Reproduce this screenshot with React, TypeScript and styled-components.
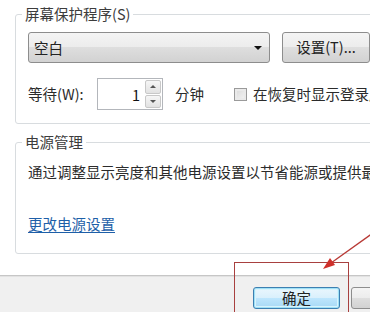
import React from "react";
import styled, { createGlobalStyle } from "styled-components";

const Global = createGlobalStyle`
  html, body { margin: 0; padding: 0; background: #fff; }
  body { font-family: "Noto Sans CJK SC", "Microsoft YaHei", sans-serif; }
`;

const Page = styled.div`
  position: relative;
  width: 370px;
  height: 312px;
  overflow: hidden;
  display: flex;
  flex-direction: column;
  background: #fff;
  font-size: 14.5px;
  color: #2b2b2b;
`;

const Content = styled.div`
  height: 275px;
  flex: none;
  box-sizing: border-box;
  padding: 6px 0 0 15px;
  display: flex;
  flex-direction: column;
  gap: 10px;
`;

const Group = styled.fieldset<{ $pt: number; $pb: number }>`
  margin: 0;
  min-width: 0;
  width: 420px;
  box-sizing: border-box;
  border: 1px solid #d8dcdf;
  border-radius: 3px;
  padding: ${(p) => p.$pt}px 0 ${(p) => p.$pb}px 12px;
`;

const Legend = styled.legend`
  margin-left: -6px;
  padding: 0 3px;
  line-height: 16px;
  color: #3c3c3c;
`;

const Row = styled.div<{ $mt?: number }>`
  display: flex;
  align-items: center;
  margin-top: ${(p) => p.$mt ?? 0}px;
`;

const Combo = styled.div`
  width: 242px;
  height: 31px;
  box-sizing: border-box;
  border: 1px solid #8d8d8d;
  border-radius: 3px;
  background: linear-gradient(#f4f4f4, #ececec 50%, #dedede 50%, #d2d2d2);
  display: flex;
  align-items: center;
  justify-content: space-between;
  padding: 0 7px 0 5px;
  color: #222;
`;

const Arrow = styled.span`
  width: 0;
  height: 0;
  border-left: 4px solid transparent;
  border-right: 4px solid transparent;
  border-top: 4px solid #111;
`;

const PushButton = styled.div<{ $w: number; $h: number }>`
  width: ${(p) => p.$w}px;
  height: ${(p) => p.$h}px;
  flex: none;
  box-sizing: border-box;
  border: 1px solid #8d8d8d;
  border-radius: 3px;
  background: linear-gradient(#f4f4f4, #ececec 50%, #dedede 50%, #d2d2d2);
  display: flex;
  align-items: center;
  justify-content: center;
  color: #222;
  line-height: 1;
`;

const DefaultButton = styled(PushButton)`
  border-color: #3c7fb1;
  box-shadow: inset 0 0 0 1px #9fe0f6, inset 0 0 0 2px #d8f3fc;
  background: linear-gradient(#eaf6fd, #d9f0fc 50%, #bee6fd 50%, #a7d9f5);
`;

const Label = styled.span<{ $w?: number }>`
  width: ${(p) => (p.$w ? `${p.$w}px` : "auto")};
  flex: none;
  white-space: nowrap;
  line-height: 20px;
`;

const Spin = styled.div`
  width: 66px;
  height: 32px;
  box-sizing: border-box;
  border: 1px solid #b3b6bb;
  display: flex;
  background: #fff;
`;

const SpinValue = styled.span`
  flex: 1;
  display: flex;
  align-items: center;
  justify-content: flex-end;
  padding-right: 5px;
  color: #111;
`;

const SpinButtons = styled.div`
  width: 16px;
  display: flex;
  flex-direction: column;
  padding: 1px 1px 1px 0;
  gap: 1px;
`;

const SpinBtn = styled.div<{ $up?: boolean }>`
  flex: 1;
  border: 1px solid #c8c8c8;
  border-radius: 2px;
  background: linear-gradient(#f6f6f6, #e2e2e2);
  display: flex;
  align-items: center;
  justify-content: center;
  &::after {
    content: "";
    border-left: 3px solid transparent;
    border-right: 3px solid transparent;
    ${(p) => (p.$up ? "border-bottom: 3px solid #555;" : "border-top: 3px solid #555;")}
  }
`;

const Check = styled.span`
  width: 13px;
  height: 13px;
  box-sizing: border-box;
  flex: none;
  border: 1px solid #9a9a9a;
  background: linear-gradient(135deg, #d8d8d8, #f6f6f6);
  box-shadow: inset 0 0 0 2px #eaeaea;
  margin-right: 6px;
`;

const Para = styled.div`
  white-space: nowrap;
  line-height: 20px;
  color: #2b2b2b;
`;

const Link = styled.a`
  display: block;
  width: max-content;
  margin-top: 32px;
  line-height: 20px;
  color: #1e5fa8;
  text-decoration: underline;
  text-underline-offset: 2px;
`;

const Footer = styled.div`
  flex: 1;
  border-top: 1px solid #c6c6c6;
  box-shadow: inset 0 1px 0 #e2e2e2;
  background: #f0f0f0;
  display: flex;
  gap: 11px;
  padding: 11px 0 0 253px;
`;

const Mark = styled.div`
  position: absolute;
  left: 234px;
  top: 262px;
  width: 113px;
  height: 80px;
  border: 1px solid #a8403f;
  pointer-events: none;
`;

const Overlay = styled.svg`
  position: absolute;
  left: 0;
  top: 0;
  pointer-events: none;
`;

export default function App() {
  return (
    <Page>
      <Global />
      <Content>
        <Group $pt={10} $pb={13}>
          <Legend>屏幕保护程序(S)</Legend>
          <Row>
            <Combo>
              <span>空白</span>
              <Arrow />
            </Combo>
            <PushButton $w={88} $h={31} style={{ marginLeft: 12 }}>
              设置(T)...
            </PushButton>
          </Row>
          <Row $mt={15}>
            <Label $w={69}>等待(W):</Label>
            <Spin>
              <SpinValue>1</SpinValue>
              <SpinButtons>
                <SpinBtn $up />
                <SpinBtn />
              </SpinButtons>
            </Spin>
            <Label $w={59} style={{ paddingLeft: 12 }}>分钟</Label>
            <Check />
            <Label>在恢复时显示登录屏幕(R)</Label>
          </Row>
        </Group>
        <Group $pt={12} $pb={19}>
          <Legend>电源管理</Legend>
          <Para>通过调整显示亮度和其他电源设置以节省能源或提供最佳性能。</Para>
          <Link>更改电源设置</Link>
        </Group>
      </Content>
      <Footer>
        <DefaultButton $w={87} $h={22}>确定</DefaultButton>
        <PushButton $w={87} $h={22}>取消</PushButton>
      </Footer>
      <Mark />
      <Overlay width="370" height="312" viewBox="0 0 370 312">
        <line x1="373" y1="233" x2="331" y2="263" stroke="#b83a36" strokeWidth="1.3" />
        <polygon points="323,269 335,265 330,258" fill="#d0302a" />
      </Overlay>
    </Page>
  );
}
